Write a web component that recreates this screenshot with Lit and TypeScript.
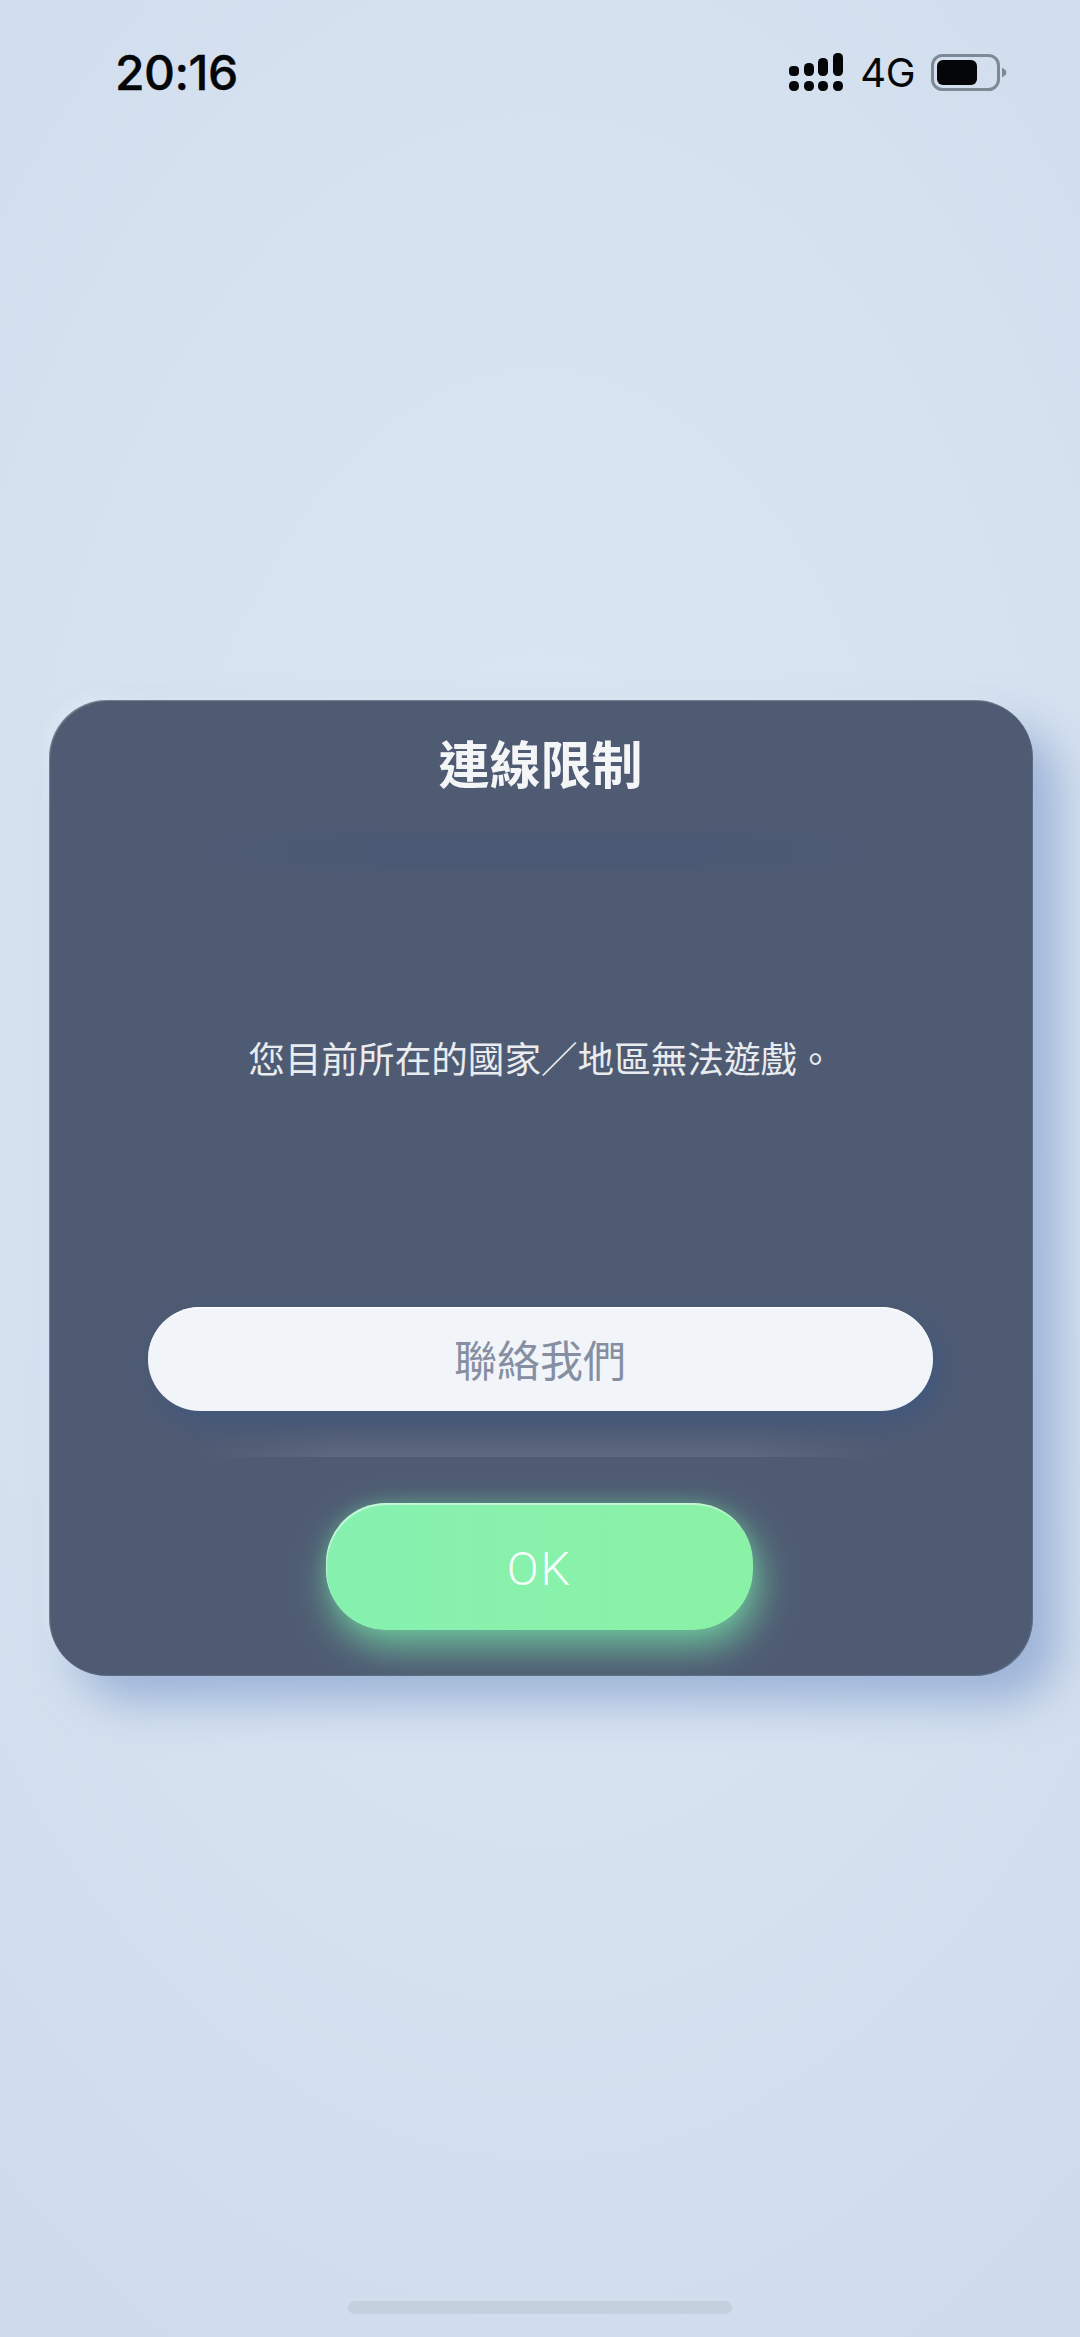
import { LitElement, html, css } from "lit";
import { customElement } from "lit/decorators.js";

@customElement("app-root")
export class AppRoot extends LitElement {
  static styles = css`
    :host {
      display: flex;
      flex-direction: column;
      width: 1080px;
      height: 2337px;
      overflow: hidden;
      background: radial-gradient(ellipse 900px 1500px at 50% 42%, #dae6f3 0%, #d6e2f0 55%, #cfdcec 100%);
      font-family: "Noto Sans CJK TC", "Noto Sans", sans-serif;
    }
    .status {
      height: 140px;
      flex: none;
      display: flex;
      justify-content: space-between;
      align-items: flex-start;
      padding: 48px 73px 0 115px;
      box-sizing: border-box;
      color: #050608;
    }
    .time {
      font: 500 48px/50px Inter, "Liberation Sans", sans-serif;
      letter-spacing: -0.5px;
      -webkit-text-stroke: 0.4px #050608;
    }
    .right {
      display: flex;
      align-items: center;
      height: 50px;
    }
    .signal { display: block; width: 56px; height: 40px; }
    .net {
      font: 400 40px/40px Inter, "Liberation Sans", sans-serif;
      margin-left: 15px;
      letter-spacing: -0.5px;
    }
    .batt { display: block; margin-left: 16px; width: 76px; height: 38px; }
    .card {
      flex: none;
      width: 984px;
      height: 976px;
      margin: 560px 0 0 49px;
      padding-top: 32px;
      box-sizing: border-box;
      border-radius: 58px;
      background: #4f5b73;
      box-shadow:
        inset 1px 1px 1px rgba(255, 255, 255, 0.25),
        inset -1px -1px 1px rgba(130, 150, 180, 0.3),
        26px 26px 44px rgba(120, 150, 200, 0.6),
        -4px -4px 12px rgba(240, 246, 252, 0.35);
      display: flex;
      flex-direction: column;
      align-items: center;
    }
    .title {
      height: 60px;
      font-size: 51px;
      line-height: 60px;
      font-weight: 700;
      color: #f4f5f7;
      margin-right: 1px;
    }
    .band {
      flex: none;
      width: 660px;
      height: 32px;
      margin-top: 43px;
      background: linear-gradient(90deg, rgba(75, 89, 116, 0), #4b5974 25%, #4b5974 75%, rgba(75, 89, 116, 0));
      filter: blur(4px);
    }
    .msg {
      height: 60px;
      margin-top: 161px;
      font-size: 36.6px;
      line-height: 60px;
      color: #e9ecef;
      white-space: nowrap;
    }
    .contact {
      flex: none;
      width: 785px;
      height: 104px;
      margin: 219px 2px 0 0;
      border-radius: 52px;
      background: #f1f5fa;
      color: #868fa1;
      font-size: 43px;
      line-height: 102px;
      text-align: center;
      box-shadow: 8px 10px 22px rgba(55, 85, 135, 0.55), inset 0 1px 1px #fff;
    }
    .glow {
      flex: none;
      width: 700px;
      height: 32px;
      margin-top: 14px;
      background: linear-gradient(90deg, rgba(94, 106, 128, 0), #5e6a80 22%, #5e6a80 78%, rgba(94, 106, 128, 0));
      -webkit-mask-image: linear-gradient(180deg, transparent, #000);
      mask-image: linear-gradient(180deg, transparent, #000);
    }
    .ok {
      flex: none;
      width: 427px;
      height: 127px;
      margin: 46px 3px 0 0;
      border-radius: 60px;
      background: linear-gradient(90deg, #86f0b0, #8af2a6);
      color: #f6fffa;
      font: 300 47px/132px Roboto, sans-serif;
      letter-spacing: 2px;
      text-align: center;
      box-shadow:
        inset 1px 2px 1px rgba(255, 255, 255, 0.5),
        5px 16px 38px rgba(122, 240, 172, 0.72),
        0 -2px 16px rgba(120, 240, 170, 0.2);
    }
    .home {
      flex: none;
      width: 384px;
      height: 13px;
      margin: 625px 0 0 348px;
      border-radius: 7px;
      background: #c3d0de;
    }
  `;

  render() {
    return html`
      <div class="status">
        <div class="time">20:16</div>
        <div class="right">
          <svg class="signal" viewBox="0 0 56 40">
            <g fill="#050608">
              <rect x="0" y="13" width="10" height="10" rx="4"></rect>
              <rect x="15" y="10" width="10" height="13" rx="4.5"></rect>
              <rect x="29" y="5" width="10" height="18" rx="4.5"></rect>
              <rect x="44" y="0" width="10" height="23" rx="4.5"></rect>
              <rect x="0" y="28" width="10" height="10" rx="4.5"></rect>
              <rect x="15" y="28" width="10" height="10" rx="4.5"></rect>
              <rect x="29" y="28" width="10" height="10" rx="4.5"></rect>
              <rect x="44" y="28" width="10" height="10" rx="4.5"></rect>
            </g>
          </svg>
          <div class="net">4G</div>
          <svg class="batt" viewBox="0 0 76 38">
            <rect x="1.5" y="1.5" width="66" height="34" rx="10" fill="none" stroke="#7f8995" stroke-width="3"></rect>
            <rect x="6" y="6" width="40" height="25" rx="6" fill="#050608"></rect>
            <path d="M71 13.5 L75 16.5 Q75.5 18.5 75 20.5 L71 23.5 Z" fill="#7f8995"></path>
          </svg>
        </div>
      </div>
      <div class="card">
        <div class="title">連線限制</div>
        <div class="band"></div>
        <div class="msg">您目前所在的國家／地區無法遊戲。</div>
        <div class="contact">聯絡我們</div>
        <div class="glow"></div>
        <div class="ok">OK</div>
      </div>
      <div class="home"></div>
    `;
  }
}
